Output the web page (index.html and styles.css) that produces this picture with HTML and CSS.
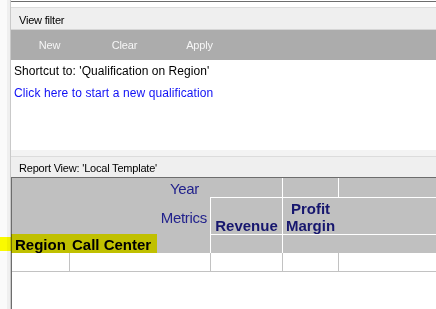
FILE: index.html
```html
<!DOCTYPE html>
<html>

<head>
  <meta charset="UTF-8">
  <meta name="viewport" content="width=device-width, initial-scale=1.0">
  <title>View filter - Report View</title>
  <link rel="stylesheet" href="styles.css">
</head>

<body>
  <div class="app">
    <div class="gutter"></div>
    <div class="main">
      <div class="edge"></div>

      <section class="filter">
        <div class="panel-head">View filter</div>
        <div class="toolbar">
          <span class="tool">New</span>
          <span class="tool">Clear</span>
          <span class="tool">Apply</span>
        </div>
        <div class="filter-body">
          <p>Shortcut to: 'Qualification on Region'</p>
          <a href="#">Click here to start a new qualification</a>
        </div>
      </section>

      <div class="split"></div>

      <section class="report">
        <div class="panel-head report-head">Report View: 'Local Template'</div>
        <div class="report-body">
          <div class="grid">
            <!-- row 1 -->
            <div class="cell year">Year</div>
            <div class="cell line-b"></div>
            <div class="cell line-l line-b"></div>
            <div class="cell line-l line-b"></div>
            <!-- row 2 -->
            <div class="cell metrics">Metrics</div>
            <div class="cell metric line-l line-b">Revenue</div>
            <div class="cell metric line-l line-b">Profit<br>Margin</div>
            <div class="cell line-b"></div>
            <!-- row 3 -->
            <div class="cell attr">Region</div>
            <div class="cell attr">Call Center</div>
            <div class="cell line-l"></div>
            <div class="cell line-l"></div>
            <div class="cell"></div>
            <!-- data row -->
            <div class="cell data"></div>
            <div class="cell data"></div>
            <div class="cell data"></div>
            <div class="cell data"></div>
            <div class="cell data"></div>
          </div>
        </div>
      </section>
    </div>

    <div class="marker"></div>
  </div>
</body>

</html>
```

FILE: styles.css
```css
html,
body {
  margin: 0;
  background: #ffffff;
}

body {
  font-family: "Liberation Sans", Arial, sans-serif;
  overflow: hidden;
}

.app {
  position: relative;
  display: flex;
  height: 309px;
  overflow: hidden;
}

.gutter {
  width: 7px;
  flex: none;
  background: #fafafa;
  border-right: 3px solid #efefef;
}

.main {
  flex: 1;
  min-width: 0;
  display: flex;
  flex-direction: column;
  border-left: 1px solid #c9c9c9;
}

.edge {
  height: 1px;
  margin-top: 1px;
  background: #6d6d6d;
}

/* view filter */
.filter {
  margin-top: 5px;
  border-top: 1px solid #dcdcdc;
}

.panel-head {
  box-sizing: border-box;
  height: 22px;
  padding: 2px 0 0 8px;
  line-height: 21px;
  font-size: 11px;
  letter-spacing: -0.2px;
  color: #000;
  background: #efefef;
  border-bottom: 1px solid #d6d6d6;
  overflow: hidden;
  white-space: nowrap;
}

.toolbar {
  display: flex;
  height: 30px;
  padding-left: 1px;
  background: #acacac;
}

.tool {
  width: 75px;
  text-align: center;
  line-height: 30px;
  font-size: 11px;
  letter-spacing: -0.2px;
  color: #f6f6f6;
}

.filter-body {
  box-sizing: border-box;
  height: 90px;
  padding: 4px 3px 0;
  font-size: 12px;
  line-height: 14px;
  letter-spacing: 0.05px;
}

.filter-body p {
  margin: 0 0 8px;
  color: #000;
}

.filter-body a {
  color: #1010f5;
  letter-spacing: 0.1px;
  text-decoration: none;
}

.split {
  height: 6px;
  background: #f3f3f3;
  border-bottom: 1px solid #dcdcdc;
}

/* report view */
.report {
  flex: 1;
  display: flex;
  flex-direction: column;
}

.report-head {
  height: 21px;
  padding-top: 1px;
  line-height: 21px;
  border-bottom: 1px solid #6d6d6d;
}

.report-body {
  flex: 1;
  border-left: 1px solid #6d6d6d;
}

.grid {
  display: grid;
  grid-template-columns: 57px 141px 72px 56px 1fr;
  grid-template-rows: 20px 37px 18px 19px;
  background: #c0c0c0;
}

.cell {
  box-sizing: border-box;
  min-width: 0;
  overflow: hidden;
  white-space: nowrap;
}

.line-l {
  border-left: 1px solid #ffffff;
}

.line-b {
  border-bottom: 1px solid #ffffff;
}

.year,
.metrics {
  grid-column: 1 / 3;
  text-align: right;
  font-size: 15px;
  letter-spacing: -0.3px;
  line-height: 17px;
  color: #22228c;
}

.year {
  padding: 2px 11px 0 0;
}

.year + .cell {
  grid-column: 3;
}

.metrics {
  padding: 11px 3px 0 0;
}

.metric {
  display: flex;
  align-items: flex-end;
  justify-content: center;
  text-align: center;
  font-size: 15px;
  font-weight: bold;
  line-height: 17px;
  color: #16166e;
}

.attr {
  padding: 1px 0 0 3px;
  font-size: 15px;
  font-weight: bold;
  line-height: 17px;
  color: #000;
}

.data {
  background: #ffffff;
  border-bottom: 1px solid #c2c2c2;
}

.data + .data {
  border-left: 1px solid #c2c2c2;
}

/* yellow highlighter stroke over the row headers */
.marker {
  position: absolute;
  left: 0;
  top: 234px;
  width: 157px;
  height: 19px;
  background: #ffff00;
  mix-blend-mode: multiply;
  clip-path: polygon(0 3px, 11px 3px, 11px 0, 100% 0, 100% 100%, 11px 100%, 11px 17px, 0 17px);
}
```
